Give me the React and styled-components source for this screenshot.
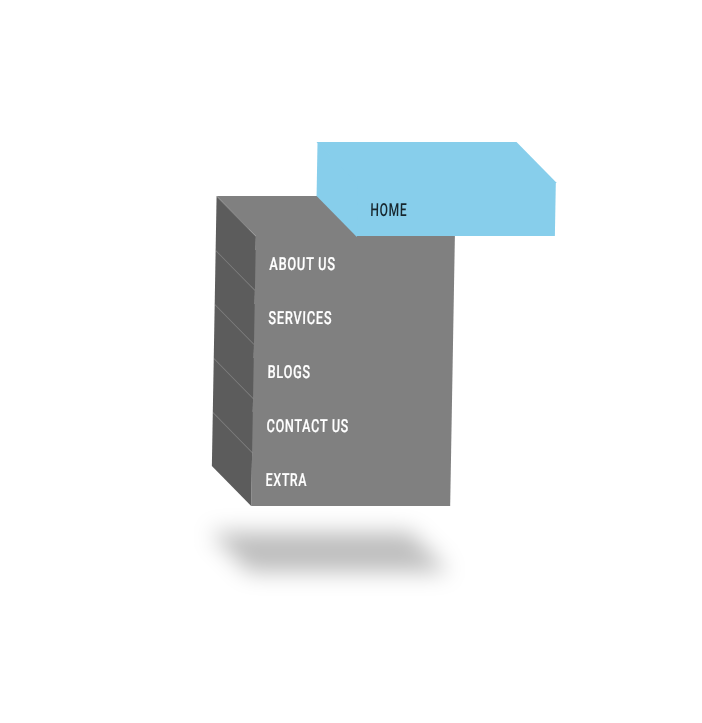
import React from "react";
import styled, { createGlobalStyle } from "styled-components";

const GlobalStyle = createGlobalStyle`
  body { margin: 0; background: #fff; }
`;

const Page = styled.main`
  box-sizing: border-box;
  height: 723px;
  padding: 182px 0 0 254px;
  overflow: hidden;
`;

const Menu = styled.ul`
  position: relative;
  width: 199px;
  margin: 0;
  padding: 0;
  list-style: none;
  transform: skewX(-1deg);
`;

const Item = styled.li`
  position: relative;
  z-index: ${(p) => p.$level};
  box-sizing: border-box;
  display: flex;
  align-items: center;
  width: 199px;
  height: 54px;
  padding: 1px 0 0 14px;
  background: ${(p) => (p.$active ? "#87ceeb" : "#808080")};
  color: ${(p) => (p.$active ? "#17272e" : "#fff")};
  transform: translateX(${(p) => (p.$active ? 100 : 0)}px);

  &::before,
  &::after {
    content: "";
    position: absolute;
  }

  &::before {
    top: 0;
    left: -40px;
    width: ${(p) => (p.$active ? 41 : 40)}px;
    height: 54px;
    background: ${(p) => (p.$active ? "#87ceeb" : "#5c5c5c")};
    box-shadow: ${(p) => (p.$active ? "none" : "inset 0 1px 0 #808080")};
    transform-origin: 40px 27px;
    transform: skewY(45deg);
  }

  &::after {
    top: -40px;
    left: ${(p) => (p.$active ? -1 : 0)}px;
    width: ${(p) => (p.$active ? 200 : 199)}px;
    height: ${(p) => (p.$active ? 41 : 40)}px;
    background: ${(p) => (p.$active ? "#87ceeb" : "#808080")};
    transform-origin: 0 40px;
    transform: skewX(45deg);
  }
`;

const Label = styled.a`
  position: relative;
  z-index: 1;
  font: 500 18px/24px Roboto, sans-serif;
  letter-spacing: 1px;
  white-space: nowrap;
  transform: scaleX(${(p) => p.$stretch});
  transform-origin: left;
  -webkit-text-stroke: ${(p) => (p.$active ? 0 : 0.2)}px currentColor;
`;

const Shadow = styled.li`
  position: absolute;
  top: 350px;
  left: -21px;
  filter: blur(11px);

  &::before {
    content: "";
    display: block;
    width: 200px;
    height: 40px;
    background: rgba(0, 0, 0, 0.255);
    transform: skewX(45deg);
  }
`;

const items = [
  { text: "HOME", stretch: 0.672 },
  { text: "ABOUT US", stretch: 0.712 },
  { text: "SERVICES", stretch: 0.71 },
  { text: "BLOGS", stretch: 0.71 },
  { text: "CONTACT US", stretch: 0.7 },
  { text: "EXTRA", stretch: 0.685 },
];

export default function App() {
  return (
    <Page>
      <GlobalStyle />
      <Menu>
        {items.map(({ text, stretch }, i) => (
          <Item key={text} $active={i === 0} $level={items.length - i}>
            <Label $active={i === 0} $stretch={stretch}>
              {text}
            </Label>
          </Item>
        ))}
        <Shadow aria-hidden="true" />
      </Menu>
    </Page>
  );
}
